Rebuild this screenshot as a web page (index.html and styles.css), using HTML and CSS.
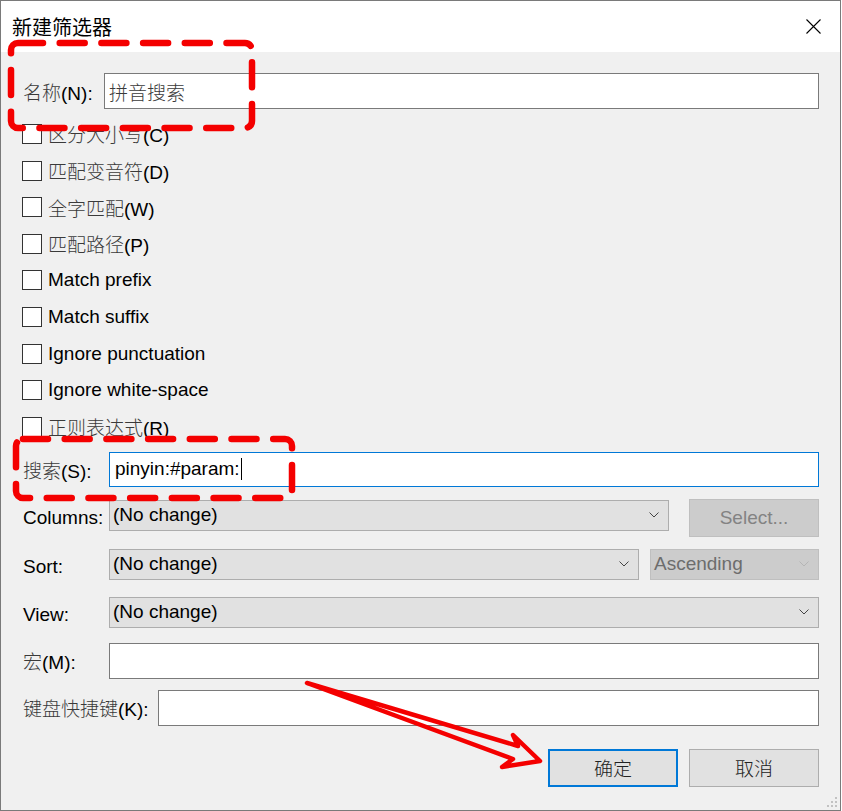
FILE: index.html
```html
<!DOCTYPE html>
<html lang="zh-CN">
<head>
  <meta charset="UTF-8">
  <title>新建筛选器</title>
  <link rel="stylesheet" href="styles.css">
</head>
<body>

  <div class="window">
    <!-- 标题栏 -->
    <div class="titlebar">
      <span class="title">新建筛选器</span>
      <svg class="close" viewBox="0 0 15 15"><path d="M0.5 0.5 L14.5 14.5 M14.5 0.5 L0.5 14.5" stroke="#000" stroke-width="1.1" fill="none"/></svg>
    </div>

    <div class="body">
      <div class="row row-name">
        <label class="lbl lbl-name"><span class="zh">名称</span>(N):</label>
        <div class="input"><span class="zh">拼音搜索</span></div>
      </div>

      <ul class="checks">
        <li><span class="box"></span><span><span class="zh">区分大小写</span>(C)</span></li>
        <li><span class="box"></span><span><span class="zh">匹配变音符</span>(D)</span></li>
        <li><span class="box"></span><span><span class="zh">全字匹配</span>(W)</span></li>
        <li><span class="box"></span><span><span class="zh">匹配路径</span>(P)</span></li>
        <li><span class="box"></span><span>Match prefix</span></li>
        <li><span class="box"></span><span>Match suffix</span></li>
        <li><span class="box"></span><span>Ignore punctuation</span></li>
        <li><span class="box"></span><span>Ignore white-space</span></li>
        <li><span class="box"></span><span><span class="zh">正则表达式</span>(R)</span></li>
      </ul>

      <div class="row row-search">
        <label class="lbl"><span class="zh">搜索</span>(S):</label>
        <div class="input focus">pinyin:#param:<span class="caret"></span></div>
      </div>

      <div class="row row-columns">
        <label class="lbl">Columns:</label>
        <div class="combo grow">(No change)<svg class="chev" viewBox="0 0 10 6"><polyline points="0.5,0.5 5,5 9.5,0.5" fill="none" stroke="#444" stroke-width="1"/></svg></div>
        <div class="btn off">Select...</div>
      </div>

      <div class="row row-sort">
        <label class="lbl low">Sort:</label>
        <div class="combo grow">(No change)<svg class="chev" viewBox="0 0 10 6"><polyline points="0.5,0.5 5,5 9.5,0.5" fill="none" stroke="#444" stroke-width="1"/></svg></div>
        <div class="combo off asc">Ascending<svg class="chev" viewBox="0 0 10 6"><polyline points="0.5,0.5 5,5 9.5,0.5" fill="none" stroke="#b5b5b5" stroke-width="1"/></svg></div>
      </div>

      <div class="row row-view">
        <label class="lbl low">View:</label>
        <div class="combo grow">(No change)<svg class="chev" viewBox="0 0 10 6"><polyline points="0.5,0.5 5,5 9.5,0.5" fill="none" stroke="#444" stroke-width="1"/></svg></div>
      </div>

      <div class="row row-macro">
        <label class="lbl"><span class="zh">宏</span>(M):</label>
        <div class="input"></div>
      </div>

      <div class="row row-key">
        <label class="lbl lbl-key"><span class="zh">键盘快捷键</span>(K):</label>
        <div class="input"></div>
      </div>

      <div class="row row-buttons">
        <div class="btn default"><span class="zh">确定</span></div>
        <div class="btn"><span class="zh">取消</span></div>
      </div>
    </div>

    <!-- 右下角拖拽点 -->
    <svg class="grip" viewBox="0 0 12 12">
      <rect x="9" y="0" width="2" height="2"/>
      <rect x="5" y="4" width="2" height="2"/><rect x="9" y="4" width="2" height="2"/>
      <rect x="1" y="8" width="2" height="2"/><rect x="5" y="8" width="2" height="2"/><rect x="9" y="8" width="2" height="2"/>
    </svg>

    <!-- 红色标注 -->
    <svg class="marks" viewBox="0 0 842 811">
      <rect x="11" y="43" width="241" height="85" rx="7" class="dash"/>
      <rect x="16" y="439" width="276" height="59" rx="7" class="dash"/>
      <polygon points="307,683 518,746 513,735 540,761 502,767 513,759" class="arrow"/>
    </svg>
  </div>

</body>
</html>
```

FILE: styles.css
```css
* { box-sizing: border-box; }
body {
  margin: 0;
  font-family: "Liberation Sans", "Noto Sans CJK SC", sans-serif;
  font-size: 19px;
  color: #000;
  background: #fff;
}
.zh { font-family: "Noto Sans CJK SC", sans-serif; font-weight: 300; color: #3a3a3a; }

/* 窗口 */
.window {
  position: relative;
  width: 841px;
  height: 811px;
  border: 1px solid #7a7a7a;
  background: #f0f0f0;
}
.titlebar {
  height: 51px;
  background: #fff;
  display: flex;
  align-items: center;
  justify-content: space-between;
  padding: 0 19px 0 11px;
}
.title { font-family: "Noto Sans CJK SC", sans-serif; font-size: 20px; }
.close { width: 15px; height: 15px; display: block; }

/* 内容 */
.body { display: flex; flex-direction: column; padding: 21px 21px 0 21px; }
.row { display: flex; align-items: center; }
.lbl { flex: none; width: 87px; padding-left: 1px; white-space: nowrap; }
.lbl-name { width: 82px; }
.lbl-key { width: 136px; }
.lbl.low { padding-top: 6px; }

.row-name { height: 36px; }
.row-search { height: 35px; margin-top: 6.9px; }
.row-columns { height: 38px; margin-top: 12px; align-items: flex-start; }
.row-columns .lbl { align-self: center; }
.row-columns .combo { margin-top: 1px; }
.row-sort { height: 31px; margin-top: 12px; }
.row-view { height: 31px; margin-top: 17px; }
.row-macro { height: 36px; margin-top: 15px; }
.row-key { height: 36px; margin-top: 11px; }
.row-buttons { height: 38px; margin-top: 23px; justify-content: flex-end; gap: 11px; }

/* 复选框 */
.checks { list-style: none; margin: 6.7px 0 0; padding: 0; }
.checks li { height: 36.6px; display: flex; align-items: center; gap: 6px; white-space: nowrap; }
.box { width: 20px; height: 20px; border: 1px solid #333; background: #fff; flex: none; }

/* 输入框 */
.input {
  flex: 1;
  height: 100%;
  background: #fff;
  border: 1px solid #7a7a7a;
  display: flex;
  align-items: center;
  padding-left: 4px;
}
.input.focus { border-color: #0078d7; padding-left: 5px; }
.caret { display: inline-block; width: 1px; height: 22px; background: #000; margin-left: 1px; }

/* 下拉框 */
.combo {
  height: 31px;
  background: #e1e1e1;
  border: 1px solid #adadad;
  display: flex;
  align-items: center;
  justify-content: space-between;
  padding: 0 9px 0 3px;
}
.combo.grow { flex: 1; }
.combo.off { background: #cccccc; border-color: #bfbfbf; color: #6d6d6d; }
.asc { width: 169px; margin-left: 11px; }
.chev { width: 10px; height: 6px; display: block; }

/* 按钮 */
.btn {
  flex: none;
  width: 130px;
  height: 38px;
  background: #e1e1e1;
  border: 1px solid #adadad;
  display: flex;
  align-items: center;
  justify-content: center;
}
.btn .zh { color: #222; }
.btn.off { margin-left: 20px; background: #cccccc; border-color: #bfbfbf; color: #838383; }
.btn.default { border: 2px solid #0078d7; }

.grip { position: absolute; right: 2px; bottom: 1px; width: 12px; height: 12px; fill: #c2c2c2; }

/* 标注 */
.marks { position: absolute; left: -1px; top: -1px; width: 842px; height: 811px; pointer-events: none; }
.dash { fill: none; stroke: #f40000; stroke-width: 6.5; stroke-dasharray: 25 16.7; stroke-linecap: round; }
.arrow { fill: none; stroke: #f40000; stroke-width: 4.5; stroke-linejoin: round; }
```
